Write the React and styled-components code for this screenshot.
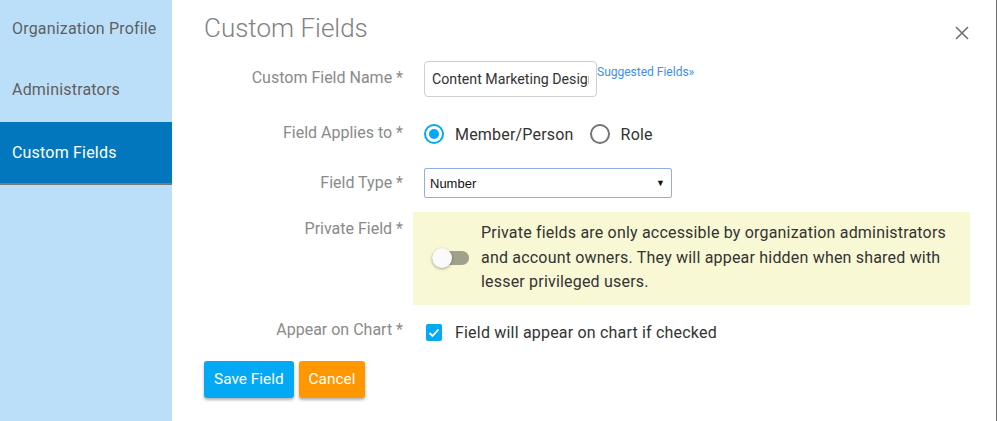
import React from "react";
import styled, { createGlobalStyle } from "styled-components";

const GlobalStyle = createGlobalStyle`
  html, body {
    margin: 0;
    padding: 0;
    background: #ffffff;
  }

  body {
    font-family: "Roboto", "Liberation Sans", sans-serif;
    letter-spacing: 0.012em;
  }
`;

const Page = styled.div`
  position: relative;
  display: flex;
  width: 997px;
  height: 421px;
  box-sizing: border-box;
  border-right: 1px solid #6b6b6b;
  overflow: hidden;
`;

const ScrollThumb = styled.div`
  position: absolute;
  right: -1px;
  top: 63px;
  width: 1px;
  height: 55px;
  background: #0b4d6e;
`;

const Sidebar = styled.nav`
  display: flex;
  flex-direction: column;
  width: 172px;
  flex-shrink: 0;
  background: #bcdff9;
`;

const NavItem = styled.div`
  display: flex;
  align-items: center;
  box-sizing: border-box;
  padding-left: 12px;
  padding-bottom: ${(p) => (p.$active ? "0" : "4px")};
  font-size: 16px;
  color: ${(p) => (p.$active ? "#ffffff" : "#5f5f5f")};
  background: ${(p) => (p.$active ? "#0277bd" : "transparent")};
  border-bottom: ${(p) => (p.$active ? "2px solid #7a7a7a" : "none")};
  height: ${(p) => (p.$active ? "63px" : "61px")};
`;

const Main = styled.main`
  display: flex;
  flex-direction: column;
  flex: 1;
  padding-left: 32px;
`;

const Header = styled.div`
  display: flex;
  align-items: center;
  justify-content: space-between;
  height: 58px;
  padding-right: 27px;
`;

const Title = styled.h2`
  margin: 0;
  margin-top: -2px;
  font-size: 26px;
  font-weight: 300;
  letter-spacing: 0;
  color: #828282;
`;

const CloseButton = styled.button`
  display: flex;
  padding: 0;
  border: none;
  background: none;
  margin-top: 8px;
`;

const Row = styled.div`
  display: grid;
  grid-template-columns: 199px 1fr;
  column-gap: 10px;
  align-items: ${(p) => (p.$top ? "start" : "center")};
  min-height: ${(p) => p.$h}px;
  margin-top: ${(p) => p.$mt}px;
`;

const Label = styled.label`
  text-align: right;
  font-size: 16px;
  letter-spacing: 0;
  color: #8a8a8a;
  padding-top: ${(p) => (p.$top ? "7px" : "0")};
  margin-top: ${(p) => (p.$top ? "0" : "-3px")};
`;

const Control = styled.div`
  display: flex;
  align-items: center;
  padding-left: ${(p) => (p.$flush ? "0" : "11px")};
`;

const TextInput = styled.input`
  width: 173px;
  height: 36px;
  box-sizing: border-box;
  padding: 0 7px;
  border: 1px solid #cfcfcf;
  border-radius: 4px;
  font-family: "Roboto", sans-serif;
  font-size: 14.2px;
  color: #333333;
  outline: none;
`;

const SuggestLink = styled.a`
  align-self: flex-start;
  margin-top: 4px;
  font-size: 12px;
  letter-spacing: 0;
  color: #3a8ff0;
  text-decoration: none;
`;

const RadioOption = styled.span`
  display: flex;
  align-items: center;
  gap: 11px;
  margin-right: 16px;
  font-size: 16px;
  color: #333333;
`;

const RadioCircle = styled.span`
  width: 20px;
  height: 20px;
  box-sizing: border-box;
  border-radius: 50%;
  border: 2px solid ${(p) => (p.$checked ? "#03a9f4" : "#737373")};
  display: flex;
  align-items: center;
  justify-content: center;

  &::after {
    content: "";
    width: 10px;
    height: 10px;
    border-radius: 50%;
    background: ${(p) => (p.$checked ? "#03a9f4" : "transparent")};
  }
`;

const SelectBox = styled.div`
  display: flex;
  align-items: center;
  justify-content: space-between;
  width: 248px;
  height: 30px;
  margin-top: -2px;
  box-sizing: border-box;
  padding: 0 6px 0 5px;
  border: 1px solid #8eaee6;
  border-radius: 2px;
  font-family: "Liberation Sans", Arial, sans-serif;
  font-size: 13px;
  letter-spacing: 0;
  color: #111111;
`;

const Arrow = styled.span`
  font-size: 9px;
  color: #111111;
`;

const Notice = styled.div`
  display: flex;
  align-items: center;
  width: 557px;
  box-sizing: border-box;
  padding: 9px 20px 10px 19px;
  background: #f8f8d4;
`;

const Toggle = styled.span`
  display: flex;
  align-items: center;
  flex-shrink: 0;
  width: 37px;
  height: 14px;
  margin-right: 12px;
  border-radius: 7px;
  background: #a1a18b;

  &::before {
    content: "";
    width: 20px;
    height: 20px;
    border-radius: 50%;
    background: #fafafa;
    box-shadow: 0 1px 3px rgba(0, 0, 0, 0.35);
  }
`;

const NoticeText = styled.p`
  margin: 0;
  font-size: 16px;
  line-height: 24.5px;
  color: #333333;
`;

const CheckOption = styled.span`
  display: flex;
  align-items: center;
  gap: 13px;
  font-size: 16px;
  color: #333333;
  margin-top: 4px;
`;

const CheckBox = styled.span`
  display: flex;
  align-items: center;
  justify-content: center;
  width: 16px;
  height: 17px;
  margin-left: 2px;
  border-radius: 2px;
  background: #03a9f4;
`;

const Actions = styled.div`
  display: flex;
  gap: 5px;
  margin-top: 12px;
`;

const Button = styled.button`
  height: 37px;
  padding: 0 10px;
  border: none;
  border-radius: 3px;
  font-family: "Roboto", sans-serif;
  font-size: 15.4px;
  color: #ffffff;
  background: ${(p) => p.$bg};
  box-shadow: 0 2px 3px rgba(0, 0, 0, 0.3);
`;

const App = () => {
  return (
    <>
      <GlobalStyle />
      <Page>
        <Sidebar>
          <NavItem>Organization Profile</NavItem>
          <NavItem>Administrators</NavItem>
          <NavItem $active>Custom Fields</NavItem>
        </Sidebar>
        <Main>
          <Header>
            <Title>Custom Fields</Title>
            <CloseButton aria-label="Close">
              <svg width="14" height="14" viewBox="0 0 14 14">
                <path d="M1 1 L13 13 M13 1 L1 13" stroke="#6f6f6f" strokeWidth="1.6" />
              </svg>
            </CloseButton>
          </Header>

          <Row $h={36} $mt={3}>
            <Label>Custom Field Name *</Label>
            <Control>
              <TextInput defaultValue="Content Marketing Design" />
              <SuggestLink href="#">Suggested Fields»</SuggestLink>
            </Control>
          </Row>

          <Row $h={36} $mt={19}>
            <Label>Field Applies to *</Label>
            <Control>
              <RadioOption>
                <RadioCircle $checked />
                Member/Person
              </RadioOption>
              <RadioOption>
                <RadioCircle />
                Role
              </RadioOption>
            </Control>
          </Row>

          <Row $h={30} $mt={17}>
            <Label>Field Type *</Label>
            <Control>
              <SelectBox>
                <span>Number</span>
                <Arrow>▼</Arrow>
              </SelectBox>
            </Control>
          </Row>

          <Row $h={92} $mt={13} $top>
            <Label $top>Private Field *</Label>
            <Control $flush>
              <Notice>
                <Toggle />
                <NoticeText>
                  Private fields are only accessible by organization administrators
                  and account owners. They will appear hidden when shared with
                  lesser privileged users.
                </NoticeText>
              </Notice>
            </Control>
          </Row>

          <Row $h={36} $mt={8}>
            <Label>Appear on Chart *</Label>
            <Control>
              <CheckOption>
                <CheckBox>
                  <svg width="12" height="10" viewBox="0 0 12 10">
                    <path d="M1.5 5 L4.5 8 L10.5 1.5" stroke="#ffffff" strokeWidth="1.8" fill="none" />
                  </svg>
                </CheckBox>
                Field will appear on chart if checked
              </CheckOption>
            </Control>
          </Row>

          <Actions>
            <Button $bg="#03a9f4">Save Field</Button>
            <Button $bg="#ff9800">Cancel</Button>
          </Actions>
        </Main>
        <ScrollThumb />
      </Page>
    </>
  );
};

export default App;
